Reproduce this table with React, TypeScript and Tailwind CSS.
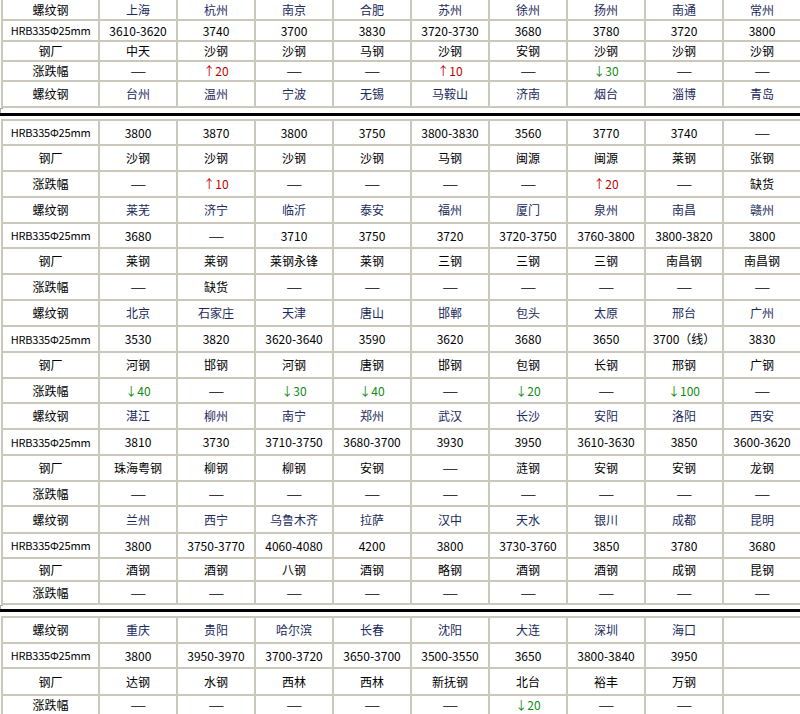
type Kind = 'city' | 'price' | 'mill' | 'change';

const labels: Record<Kind, string> = {
  city: '螺纹钢',
  price: 'HRB335Φ25mm',
  mill: '钢厂',
  change: '涨跌幅',
};

type Row = [Kind, string[]];

const D = '—';

const section1: Row[] = [
  ['city', ['上海', '杭州', '南京', '合肥', '苏州', '徐州', '扬州', '南通', '常州']],
  ['price', ['3610-3620', '3740', '3700', '3830', '3720-3730', '3680', '3780', '3720', '3800']],
  ['mill', ['中天', '沙钢', '沙钢', '马钢', '沙钢', '安钢', '沙钢', '沙钢', '沙钢']],
  ['change', [D, 'u20', D, D, 'u10', D, 'd30', D, D]],
  ['city', ['台州', '温州', '宁波', '无锡', '马鞍山', '济南', '烟台', '淄博', '青岛']],
];

const section2: Row[] = [
  ['price', ['3800', '3870', '3800', '3750', '3800-3830', '3560', '3770', '3740', D]],
  ['mill', ['沙钢', '沙钢', '沙钢', '沙钢', '马钢', '闽源', '闽源', '莱钢', '张钢']],
  ['change', [D, 'u10', D, D, D, D, 'u20', D, '缺货']],
  ['city', ['莱芜', '济宁', '临沂', '泰安', '福州', '厦门', '泉州', '南昌', '赣州']],
  ['price', ['3680', D, '3710', '3750', '3720', '3720-3750', '3760-3800', '3800-3820', '3800']],
  ['mill', ['莱钢', '莱钢', '莱钢永锋', '莱钢', '三钢', '三钢', '三钢', '南昌钢', '南昌钢']],
  ['change', [D, '缺货', D, D, D, D, D, D, D]],
  ['city', ['北京', '石家庄', '天津', '唐山', '邯郸', '包头', '太原', '邢台', '广州']],
  ['price', ['3530', '3820', '3620-3640', '3590', '3620', '3680', '3650', '3700（线）', '3830']],
  ['mill', ['河钢', '邯钢', '河钢', '唐钢', '邯钢', '包钢', '长钢', '邢钢', '广钢']],
  ['change', ['d40', D, 'd30', 'd40', D, 'd20', D, 'd100', D]],
  ['city', ['湛江', '柳州', '南宁', '郑州', '武汉', '长沙', '安阳', '洛阳', '西安']],
  ['price', ['3810', '3730', '3710-3750', '3680-3700', '3930', '3950', '3610-3630', '3850', '3600-3620']],
  ['mill', ['珠海粤钢', '柳钢', '柳钢', '安钢', D, '涟钢', '安钢', '安钢', '龙钢']],
  ['change', [D, D, D, D, D, D, D, D, D]],
  ['city', ['兰州', '西宁', '乌鲁木齐', '拉萨', '汉中', '天水', '银川', '成都', '昆明']],
  ['price', ['3800', '3750-3770', '4060-4080', '4200', '3800', '3730-3760', '3850', '3780', '3680']],
  ['mill', ['酒钢', '酒钢', '八钢', '酒钢', '略钢', '酒钢', '酒钢', '成钢', '昆钢']],
  ['change', [D, D, D, D, D, D, D, D, D]],
];

const section3: Row[] = [
  ['city', ['重庆', '贵阳', '哈尔滨', '长春', '沈阳', '大连', '深圳', '海口', '']],
  ['price', ['3800', '3950-3970', '3700-3720', '3650-3700', '3500-3550', '3650', '3800-3840', '3950', '']],
  ['mill', ['达钢', '水钢', '西林', '西林', '新抚钢', '北台', '裕丰', '万钢', '']],
  ['change', [D, D, D, D, D, 'd20', D, D, '']],
];

const cell = 'bg-white flex items-center justify-center whitespace-nowrap leading-none';

function Value({ kind, v }: { kind: Kind; v: string }) {
  if (v === D) {
    return <span className="inline-block scale-x-150 text-black">—</span>;
  }
  if (kind === 'change' && v.startsWith('u')) {
    return <span className="text-[#c00000]">↑{v.slice(1)}</span>;
  }
  if (kind === 'change' && v.startsWith('d')) {
    return <span className="text-[#118a11]">↓{v.slice(1)}</span>;
  }
  if (kind === 'city') return <span className="text-[#1b2a5c]">{v}</span>;
  return <span className="text-black">{v}</span>;
}

function Section({ rows, className }: { rows: Row[]; className: string }) {
  return (
    <div className={`grid grid-cols-[95px_repeat(9,76px)] gap-[2px] bg-[#cbc7bb] w-[802px] ${className}`}>
      {rows.map(([kind, vals], r) => (
        <div key={r} className="contents">
          <div className={`${cell} text-black ${kind === 'price' ? 'text-[11px] tracking-[-0.2px]' : 'text-[12px]'}`}>
            {labels[kind]}
          </div>
          {vals.map((v, c) => (
            <div key={c} className={`${cell} text-[12px]`}>
              <Value kind={kind} v={v} />
            </div>
          ))}
        </div>
      ))}
    </div>
  );
}

export default function App() {
  return (
    <div className="w-[800px] h-[714px] overflow-hidden bg-white font-['Noto_Sans_CJK_SC','Noto_Sans',sans-serif]">
      <div className="ml-[1px]">
        <Section rows={section1} className="px-[2px] pb-[2px] grid-rows-[19px_19px_18px_18px_24px]" />
      </div>
      <div className="h-[5px] w-[3px] border-l border-t border-[#a8a8a8]" />
      <div className="h-[3px] bg-black" />
      <div className="h-[3px]" />
      <div className="ml-[1px]">
        <Section
          rows={section2}
          className="p-[2px] grid-rows-[23px_24px_24px_24px_23px_24px_24px_24px_24px_24px_23px_24px_24px_24px_23px_25px_23px_21px_21px]"
        />
      </div>
      <div className="h-[4px] w-[3px] border-l border-t border-[#a8a8a8]" />
      <div className="h-[3px] bg-black" />
      <div className="h-[4px]" />
      <div className="ml-[1px]">
        <Section rows={section3} className="px-[2px] pt-[2px] grid-rows-[24px_23px_25px_18px]" />
      </div>
    </div>
  );
}
